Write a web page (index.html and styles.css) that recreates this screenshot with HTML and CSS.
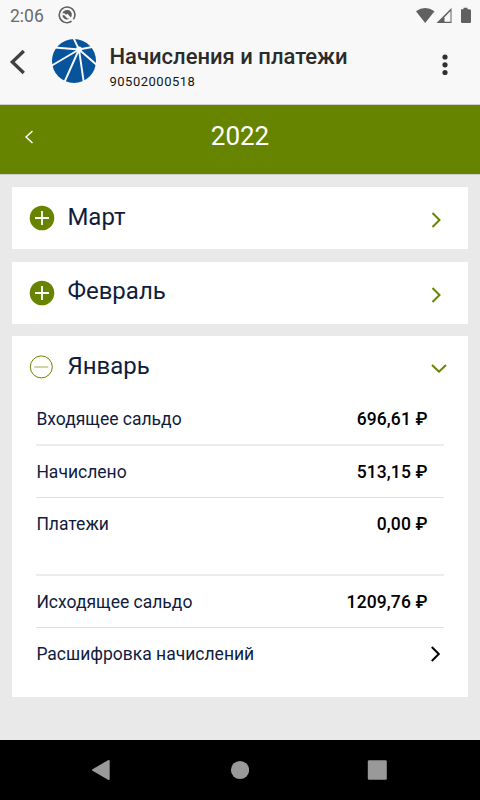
FILE: index.html
```html
<!DOCTYPE html>
<html lang="ru">
<head>
<meta charset="utf-8">
<meta name="viewport" content="width=device-width">
<title>Начисления и платежи</title>
<link rel="stylesheet" href="styles.css">
</head>
<body>
<div class="status">
  <span class="clock">2:06</span>
  <svg class="app-icon" width="18" height="18" viewBox="0 0 18 18"><path d="M13.6 15.2A7.8 7.8 0 1 1 15.4 13.4" fill="none" stroke="#606060" stroke-width="1.6"/><path d="M4.4 7.2C5.5 3.9 10.2 2.8 12.7 5.5C14.4 7.5 14 10 12.9 11.4L9.5 7.8L8 8.8L6.5 7.2Z" fill="#606060"/><path d="M4.3 9.5L6 9L9.5 12.5L11.5 12.7C8.5 14.5 4.8 12.8 4.3 9.5Z" fill="#606060"/></svg>
  <svg class="signals" width="58" height="18" viewBox="0 0 58 18"><path d="M1 4.2Q10 -2.2 19.5 4.2L10.2 16Z" fill="#606060"/><path d="M21.5 16L36.5 1V16Z" fill="#606060"/><path d="M29.5 10.2L35.5 4.1V14.8H29.5Z" fill="#f8f8f8"/><path d="M46 2.2H48.5V.8H52.5V2.2H54Q56 2.2 56 3.2V15Q56 16 55 16H47Q46 16 46 15V3Q46 2.2 46 2.2Z" fill="#606060"/></svg>
</div>
<header class="appbar">
  <svg class="back" width="18" height="26" viewBox="0 0 18 26"><path d="M15.8 2L4.3 13L15.8 24" fill="none" stroke="#404040" stroke-width="3.3"/></svg>
  <svg class="logo" width="46" height="46" viewBox="0 0 46 46"><circle cx="23" cy="23" r="22" fill="#07549c"/><g stroke="#f8f8f8" stroke-width="1.9"><path d="M28 11.5L22 -1M28 11.5L41 9M28 11.5L4 9.5M28 11.5L0 28M28 11.5L13 45M28 11.5L33 46M28 11.5L47 28"/></g><circle cx="28" cy="11.5" r="3.1" fill="#f8f8f8"/></svg>
  <div class="titles">
    <h1>Начисления и платежи</h1>
    <p>90502000518</p>
  </div>
  <svg class="more" width="8" height="24" viewBox="0 0 8 24"><g fill="#303030"><circle cx="4" cy="4" r="2.6"/><circle cx="4" cy="11.8" r="2.6"/><circle cx="4" cy="19.5" r="2.6"/></g></svg>
</header>
<section class="year">
  <svg class="prev" width="10" height="14" viewBox="0 0 10 14"><path d="M8.5 1L2 7L8.5 13" fill="none" stroke="#fff" stroke-width="1.4"/></svg>
  <h2>2022</h2>
</section>
<main>
  <article class="card">
    <div class="month">
      <svg class="toggle" width="26" height="26" viewBox="0 0 26 26"><circle cx="13" cy="13" r="12.3" fill="#678400"/><path d="M6 13H20M13 6V20" stroke="#fff" stroke-width="1.8"/></svg>
      <h3>Март</h3>
      <svg class="chevron" width="18" height="18" viewBox="0 0 18 18"><path d="M2.5 2L9.5 9L2.5 16" fill="none" stroke="#678400" stroke-width="2"/></svg>
    </div>
  </article>
  <article class="card">
    <div class="month">
      <svg class="toggle" width="26" height="26" viewBox="0 0 26 26"><circle cx="13" cy="13" r="12.3" fill="#678400"/><path d="M6 13H20M13 6V20" stroke="#fff" stroke-width="1.8"/></svg>
      <h3>Февраль</h3>
      <svg class="chevron" width="18" height="18" viewBox="0 0 18 18"><path d="M2.5 2L9.5 9L2.5 16" fill="none" stroke="#678400" stroke-width="2"/></svg>
    </div>
  </article>
  <article class="card open">
    <div class="month">
      <svg class="toggle" width="26" height="26" viewBox="0 0 26 26"><circle cx="12.3" cy="12.9" r="11" fill="none" stroke="#678400" stroke-width="1"/><path d="M5.3 13H19.3" stroke="#a9b96a" stroke-width="1.2"/></svg>
      <h3>Январь</h3>
      <svg class="chevron" width="18" height="18" viewBox="0 0 18 18"><path d="M2 5L9 11.7L16 5" fill="none" stroke="#678400" stroke-width="2"/></svg>
    </div>
    <dl class="rows">
      <div class="row thick"><dt>Входящее сальдо</dt><dd>696,61 ₽</dd></div>
      <div class="row"><dt>Начислено</dt><dd>513,15 ₽</dd></div>
      <div class="row tall thick"><dt>Платежи</dt><dd>0,00 ₽</dd></div>
      <div class="row"><dt>Исходящее сальдо</dt><dd>1209,76 ₽</dd></div>
      <div class="row link"><dt>Расшифровка начислений</dt><dd><svg width="12" height="18" viewBox="0 0 12 18"><path d="M.8 2L7.8 9L.8 16" fill="none" stroke="#000" stroke-width="2"/></svg></dd></div>
    </dl>
  </article>
</main>
<nav class="navbar">
  <svg width="20" height="22" viewBox="0 0 20 22"><path d="M1.5 10.2Q.5 11 1.5 11.8L17 20.8Q18.7 21.6 18.7 20V2Q18.7 .4 17 1.2Z" fill="#999"/></svg>
  <svg width="20" height="22" viewBox="0 0 20 22"><circle cx="11" cy="11" r="9.1" fill="#999"/></svg>
  <svg width="20" height="22" viewBox="0 0 20 22"><rect x=".8" y="1.2" width="19" height="19.6" rx="1.4" fill="#999"/></svg>
</nav>
</body>
</html>
```
FILE: styles.css
```css
* { box-sizing: border-box; }
body {
  margin: 0;
  width: 480px;
  height: 800px;
  overflow: hidden;
  display: flex;
  flex-direction: column;
  background: #e9e9e9;
  font-family: Roboto, "Liberation Sans", sans-serif;
}
h1, h2, h3, p, dl, dd { margin: 0; font-weight: 400; }
svg { display: block; flex: none; }
.status {
  height: 32px;
  display: flex;
  align-items: center;
  padding: 0 7.5px 0 10px;
  background: #f8f8f8;
}
.clock { width: 48px; font-size: 17.5px; line-height: 32px; color: #6a6a6a; }
.app-icon { margin-top: -2px; }
.signals { margin-left: auto; }
.appbar {
  height: 73px;
  display: flex;
  align-items: flex-start;
  padding: 0 31px 0 8px;
  background: #f8f8f8;
  border-bottom: 1px solid #cfcfcf;
}
.back { margin-top: 17px; }
.logo { margin: 6px 0 0 25px; }
.titles { margin: 11px 0 0 12.5px; white-space: nowrap; }
h1 { font-size: 22px; line-height: 28px; font-weight: 500; color: #2b2b2b; }
.titles p { font-size: 13px; line-height: 16px; margin-top: 3px; letter-spacing: .5px; color: #151515; }
.more { margin: 21px 0 0 auto; }
.year {
  height: 70px;
  display: flex;
  padding-left: 24px;
  background: #678400;
  border-bottom: 1px solid #cdcec8;
  color: #fff;
}
.prev { margin-top: 25px; }
h2 { flex: 1; margin-right: 34px; text-align: center; font-size: 26px; line-height: 30px; margin-top: 16px; }
main { flex: 1; padding: 12.3px 12.4px 0; display: flex; flex-direction: column; gap: 12.4px; }
.card { background: #fff; height: 62px; flex: none; }
.card.open { height: 361px; }
.month { display: flex; height: 62px; align-items: center; padding: 0 20px 0 17px; }
h3 { margin: -3px 0 0 12px; font-size: 24px; line-height: 30px; color: #101c3d; }
.chevron { margin: 4px 0 0 auto; }
.rows { margin: -5px 24px 0; color: #101c3d; }
.row {
  height: 52.5px;
  display: flex;
  justify-content: space-between;
  padding: 14px 16px 0 0;
  border-bottom: 1px solid #dfdfdf;
  font-size: 17.5px;
  line-height: 24px;
}
.row.thick { border-bottom: 2px solid #ededed; }
.row.tall { height: 77.6px; }
.row dd { color: #000; font-weight: 500; letter-spacing: .12px; }
.row.link { border: 0; padding-right: .5px; }
.row.link svg { margin-top: 3px; }
.navbar {
  height: 60px;
  display: flex;
  align-items: center;
  justify-content: space-between;
  padding: 0 93px 0 91px;
  background: #000;
}
```
